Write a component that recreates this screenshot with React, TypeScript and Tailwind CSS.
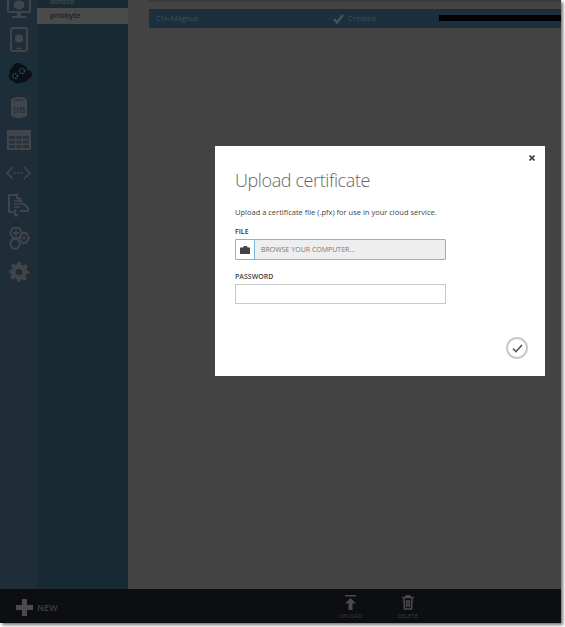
import React from "react";

const ic = "#414549";

function NavItem({ children }: { children: React.ReactNode }) {
  return <div className="h-[33px] flex items-center justify-center w-[37px] shrink-0">{children}</div>;
}

export default function App() {
  return (
    <div className="w-[565px] h-[627px] bg-white relative overflow-hidden" style={{ fontFamily: '"Open Sans", "Noto Sans", sans-serif' }}>
      <div className="w-[561px] h-[623px] bg-[#434343] flex flex-col shadow-[2px_2px_3px_rgba(0,0,0,0.55)] overflow-hidden">
        <div className="flex flex-1 min-h-0">
          {/* icon rail */}
          <div className="w-[37px] bg-[#1f2d38] flex flex-col items-center shrink-0 overflow-hidden">
            <div className="w-[37px] h-[20px] overflow-hidden flex items-end justify-center shrink-0">
              <svg width="26" height="20" viewBox="0 0 26 20" className="shrink-0">
                <rect x="2" y="-8" width="22" height="20" rx="1" fill="none" stroke={ic} strokeWidth="2.200" />
                <path d="M13 0l5 2.500v5L13 10l-5-2.500v-5z" fill={ic} />
                <path d="M11 13h4v3h-4zM6 16h14v2H6z" fill={ic} />
              </svg>
            </div>
            <div className="h-[33px] w-[37px] flex items-center justify-center mt-[3px] shrink-0">
              <svg width="18" height="25" viewBox="0 0 18 25">
                <rect x="1" y="1" width="16" height="23" rx="2" fill="none" stroke={ic} strokeWidth="2" />
                <path d="M6 21.500h6" stroke={ic} strokeWidth="1.500" />
                <path d="M9 7l4 2v5l-4 2-4-2V9z" fill={ic} />
              </svg>
            </div>
            <div className="h-[33px] w-[37px] mt-[1px] bg-[#1a2f3a] flex items-center justify-center shrink-0">
              <svg width="27" height="22" viewBox="0 0 27 22">
                <path d="M8 4a5 5 0 0 1 9-2 5 5 0 0 1 5 5 4.500 4.500 0 0 1 1 9 5 5 0 0 1-7 3 5 5 0 0 1-8-1 5 5 0 0 1-3-8 5 5 0 0 1 3-6z" fill="#0b1014" />
                <circle cx="17" cy="8" r="2.500" fill="none" stroke="#2c4a5a" strokeWidth="1.500" strokeDasharray="1.500 .8" />
                <circle cx="10" cy="13" r="2.500" fill="none" stroke="#2c4a5a" strokeWidth="1.500" strokeDasharray="1.500 .8" />
              </svg>
            </div>
            <NavItem>
              <svg width="18" height="22" viewBox="0 0 18 22">
                <path d="M1 4c0-4 16-4 16 0v15c0 4-16 4-16 0z" fill={ic} />
                <path d="M3 4c2-1.500 10-1.500 12 0-2 1.500-10 1.500-12 0z" fill="#2a3a44" />
                <text x="9" y="16.500" textAnchor="middle" fontSize="9" fontWeight="700" fill="#26343f" fontFamily="Open Sans, sans-serif">DB</text>
              </svg>
            </NavItem>
            <NavItem>
              <svg width="24" height="20" viewBox="0 0 24 20">
                <rect x="0" y="0" width="24" height="20" fill={ic} />
                <path d="M2 6h6v3H2zM9.500 6h5v3h-5zM16 6h6v3h-6zM2 10.500h6v3H2zM9.500 10.500h5v3h-5zM16 10.500h6v3h-6zM2 15h6v3H2zM9.500 15h5v3h-5zM16 15h6v3h-6z" fill="#26343f" />
              </svg>
            </NavItem>
            <NavItem>
              <svg width="25" height="14" viewBox="0 0 25 14" fill="none" stroke={ic} strokeWidth="1.600">
                <path d="M7 1 1 7l6 6M18 1l6 6-6 6" />
                <path d="M8 7h1.800M11.600 7h1.800M15.200 7h1.800" strokeWidth="2" />
              </svg>
            </NavItem>
            <NavItem>
              <svg width="22" height="24" viewBox="0 0 22 24" fill="none" stroke={ic} strokeWidth="2">
                <path d="M5 18H1V1h8v4M9 4c4 0 4 3 5 6 4 0 6 2 6 7h-8" />
                <path d="M6 7h6M6 10h6M6 13h6" strokeWidth="1.500" />
                <path d="M7 15v5" strokeWidth="2.500" />
                <path d="M5 20h6l-3 3.500z" fill={ic} stroke="none" />
              </svg>
            </NavItem>
            <NavItem>
              <svg width="23" height="23" viewBox="0 0 23 23" fill="none" stroke={ic} strokeWidth="1.800">
                <path d="M6 1h6l3 5-3 5H6L3 6z" />
                <path d="M6 6h6M9 3.500v5" strokeWidth="2" />
                <path d="M5.500 12h5l2.500 4.500-2.500 5h-5L3 16.500z" />
                <path d="M15 6h4l3 5-3 5h-4l-2-5z" />
                <circle cx="17" cy="11" r="1.500" fill={ic} stroke="none" />
              </svg>
            </NavItem>
            <NavItem>
              <svg width="20" height="20" viewBox="0 0 24 24" fill={ic}>
                <path fillRule="evenodd" d="M10 0h4l.7 3.300 2.200.9L19.800 2.400l2.800 2.800-1.800 2.900.9 2.200L24 11v3l-3.300.7-.9 2.200 1.800 2.900-2.800 2.800-2.900-1.800-2.200.9L13 24h-3l-.7-3.500-2.200-.9-2.900 1.800-2.800-2.800 1.800-2.900-.9-2.200L0 14v-4l3.300-.7.900-2.200-1.800-2.900 2.800-2.800 2.900 1.800 2.200-.9zM12 8a4 4 0 1 0 0 8 4 4 0 0 0 0-8z" />
              </svg>
            </NavItem>
          </div>
          {/* sub nav */}
          <div className="w-[91px] bg-[#182a33] shrink-0 text-[7.5px] font-semibold flex flex-col">
            <div className="h-[8px] overflow-hidden text-[#3c4a50] pl-[13px] leading-[3px]">bindsb</div>
            <div className="h-[16px] bg-[#4a4a4a] text-[#16202a] pl-[13px] flex items-center">priobyte</div>
          </div>
          {/* content */}
          <div className="flex-1 pl-[21px] min-w-0">
            <div className="h-[2px] bg-[#3a3a3a]" />
            <div className="h-[7px]" />
            <div className="h-[19px] bg-[#1b303c] flex items-center text-[#3f4f58] text-[7.5px]">
              <span className="ml-[7px] w-[177px] shrink-0">CN=Magnus</span>
              <svg className="shrink-0" width="11" height="10" viewBox="0 0 11 10" fill="none" stroke="#47535a" strokeWidth="2.200">
                <path d="M1 5l3 3.500L10 1" />
              </svg>
              <span className="ml-[4px] w-[91px] shrink-0">Created</span>
              <div className="h-[6px] flex-1 bg-black mb-[2px]" />
            </div>
          </div>
        </div>
        {/* bottom bar */}
        <div className="h-[34px] bg-[#0c0e11] shrink-0 flex items-center pt-[3px]">
          <svg className="ml-[16px] shrink-0" width="17" height="17" viewBox="0 0 17 17" fill="#4b4b4b">
            <path d="M6 0h5v6h6v5h-6v6H6v-6H0V6h6z" />
          </svg>
          <span className="ml-[4px] text-[9px] font-semibold text-[#3d3d42]">NEW</span>
          <div className="ml-[281px] flex flex-col items-center w-[24px] mt-[-1px]">
            <svg width="13" height="15" viewBox="0 0 13 15" fill="#4b4b4b">
              <path d="M1 0h11v1.500H1zM6.500 3 12 8.500H8.500V15h-4V8.500H1z" />
            </svg>
            <span className="text-[6px] leading-[8px] mt-[2px] text-[#3a3e42]">UPLOAD</span>
          </div>
          <div className="ml-[33px] flex flex-col items-center w-[24px] mt-[-1px]">
            <svg width="12" height="15" viewBox="0 0 12 15" fill="none" stroke="#4b4b4b" strokeWidth="1.600">
              <path d="M0 2.500h12M4 2.500V1h4v1.500M2 3.500l.5 10.500h7L10 3.500M4.800 5v7M7.200 5v7" />
            </svg>
            <span className="text-[6px] leading-[8px] mt-[2px] text-[#3a3e42]">DELETE</span>
          </div>
        </div>
      </div>
      {/* modal */}
      <div className="absolute left-[215px] top-[146px] w-[330px] h-[230px] bg-white pl-[20px]">
        <svg className="absolute right-[10px] top-[9px]" width="6" height="6" viewBox="0 0 6 6" stroke="#444" strokeWidth="1.700">
          <path d="M0.500 0.500l5 5M5.500 0.500l-5 5" />
        </svg>
        <h1 className="text-[18px] tracking-[-0.4px] leading-[24px] font-light text-[#666666] pt-[22px] h-[46px] box-content">Upload certificate</h1>
        <p className="text-[7.5px] leading-[11px] text-[#444444] mt-[-7px]">Upload a certificate file (.pfx) for use in your cloud service.</p>
        <label className="block text-[7px] leading-[10px] font-semibold text-[#333333] mt-[9px]">FILE</label>
        <div className="flex w-[211px] h-[21px] mt-[2px] border border-[#7fb8dc] rounded-[1px]">
          <div className="w-[19px] h-full flex items-center justify-center border-r border-[#7fb8dc] bg-white">
            <svg width="10" height="8" viewBox="0 0 10 8" fill="#444">
              <path d="M0 1.500h3L4 0h3l.5 1.500H10V8H0z" />
            </svg>
          </div>
          <div className="flex-1 bg-[#eeeeee] flex items-center pl-[6px] pt-[1px] text-[7px] text-[#777]">BROWSE YOUR COMPUTER...</div>
        </div>
        <label className="block text-[7px] leading-[10px] font-semibold text-[#444444] mt-[12px]">PASSWORD</label>
        <div className="w-[211px] h-[20px] mt-[2px] border border-[#c8c8c8] bg-white" />
        <div className="absolute left-[291px] top-[191px] w-[22px] h-[22px] rounded-full border-2 border-[#c9c9c9] flex items-center justify-center">
          <svg width="11" height="9" viewBox="0 0 11 9" fill="none" stroke="#555" strokeWidth="1.600">
            <path d="M1 4.500 4 7.500 10 1" />
          </svg>
        </div>
      </div>
    </div>
  );
}
